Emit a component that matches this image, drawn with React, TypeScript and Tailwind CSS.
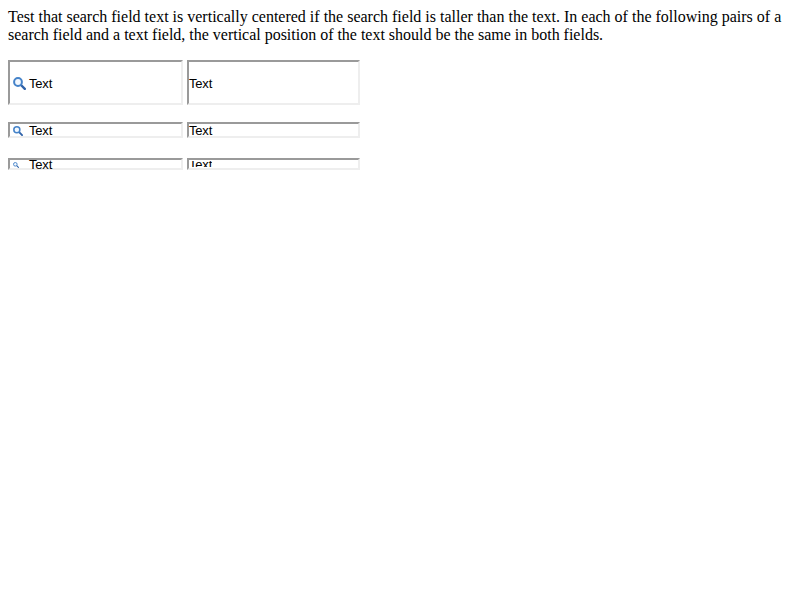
import React from "react";

function Lens({ size }: { size: number }) {
  return (
    <svg width={size} height={size} viewBox="0 0 13 13" fill="none" className="block shrink-0">
      <path d="M8 8 L11.8 11.8" stroke="#2f62a8" strokeWidth="2.4" strokeLinecap="round" />
      <circle cx="5" cy="5" r="3.9" stroke="#4583c9" strokeWidth="2" fill="#f4f9ff" />
    </svg>
  );
}

const field =
  "box-border flex border-2 border-t-[#9a9a9a] border-l-[#9a9a9a] border-r-[#eeeeee] border-b-[#eeeeee] bg-white font-['Liberation_Sans',Arial,sans-serif] text-[13px] leading-[15px]";

export default function App() {
  return (
    <div className="h-[600px] w-[800px] overflow-hidden bg-white p-2 text-black">
      <div className="font-['Liberation_Serif','Times_New_Roman',serif] text-[16px] leading-[18px]">
        <p className="whitespace-nowrap">
          Test that search field text is vertically centered if the search field is taller than the text. In each of the following pairs of a
        </p>
        <p className="whitespace-nowrap tracking-[-0.012px]">search field and a text field, the vertical position of the text should be the same in both fields.</p>
      </div>
      <div className="mt-4 flex gap-1">
        <div className={`${field} h-[45px] w-[175px] pl-[3px]`}>
          <div className="mt-[15px] w-4"><Lens size={13} /></div>
          <span className="mt-[14px] tracking-[-0.2px]">Text</span>
        </div>
        <div className={`${field} h-[45px] w-[173px]`}>
          <span className="mt-[14px] tracking-[-0.2px]">Text</span>
        </div>
      </div>
      <div className="mt-[17px] flex gap-1">
        <div className={`${field} h-[16px] w-[175px] pl-[3px]`}>
          <div className="mt-[2px] w-4"><Lens size={10} /></div>
          <span className="-mt-px tracking-[-0.2px]">Text</span>
        </div>
        <div className={`${field} h-[16px] w-[173px]`}>
          <span className="-mt-px tracking-[-0.2px]">Text</span>
        </div>
      </div>
      <div className="mt-5 flex gap-1">
        <div className={`${field} h-[12px] w-[175px] pl-[3px]`}>
          <div className="mt-[2px] w-4"><Lens size={6} /></div>
          <span className="-mt-[3px] tracking-[-0.2px]">Text</span>
        </div>
        <div className={`${field} h-[12px] w-[173px] py-px`}>
          <div className="flex h-[6px] overflow-hidden">
            <span className="-mt-1 tracking-[-0.2px]">Text</span>
          </div>
        </div>
      </div>
    </div>
  );
}
